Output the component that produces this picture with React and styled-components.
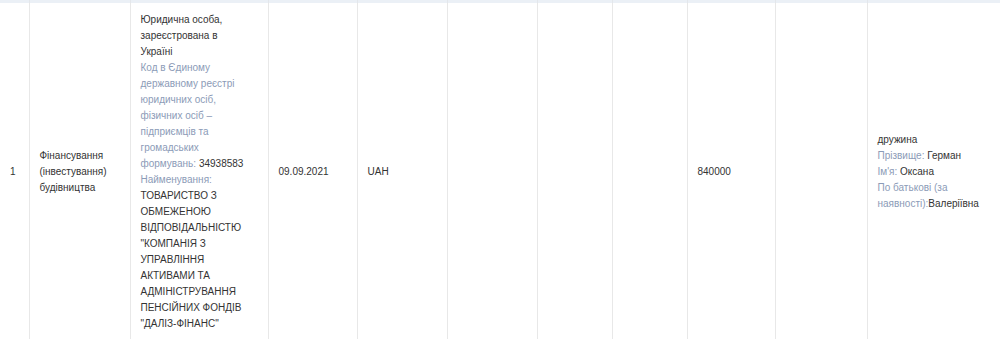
import React from "react";
import styled, { createGlobalStyle } from "styled-components";

const Global = createGlobalStyle`
  html, body { margin: 0; padding: 0; background: #fff; }
  body { font-family: "Liberation Sans", Arial, sans-serif; }
`;

const Table = styled.table`
  width: 1000px;
  border-collapse: collapse;
  table-layout: fixed;
  font-size: 10px;
  line-height: 16px;
  color: #333;
`;

const HeadCell = styled.th`
  height: 3px;
  padding: 0;
  background: #ebf0f6;
  border-right: 1px solid #e4e7eb;
  &:last-child { border-right: none; }
`;

const Cell = styled.td`
  padding: 9px 18px 7px 10px;
  vertical-align: middle;
  text-align: left;
  border-right: 1px solid #e8e8e8;
  word-wrap: break-word;
  &:last-child { border-right: none; }
`;

const Label = styled.span`
  color: #8c9bb7;
`;

const widths = [29, 101, 138, 89, 90, 90, 75, 75, 88, 92, 133];

export default function App() {
  return (
    <>
      <Global />
      <Table>
        <colgroup>
          {widths.map((w, i) => (
            <col key={i} style={{ width: w }} />
          ))}
        </colgroup>
        <thead>
          <tr>
            {widths.map((w, i) => (
              <HeadCell key={i} />
            ))}
          </tr>
        </thead>
        <tbody>
          <tr>
            <Cell>1</Cell>
            <Cell>Фінансування (інвестування) будівництва</Cell>
            <Cell>
              Юридична особа, зареєстрована в Україні
              <br />
              <Label>
                Код в Єдиному державному реєстрі юридичних осіб, фізичних осіб –
                підприємців та громадських формувань:
              </Label>{" "}
              34938583
              <br />
              <Label>Найменування:</Label>
              <br />
              ТОВАРИСТВО З ОБМЕЖЕНОЮ ВІДПОВІДАЛЬНІСТЮ "КОМПАНІЯ З УПРАВЛІННЯ
              АКТИВАМИ ТА АДМІНІСТРУВАННЯ ПЕНСІЙНИХ ФОНДІВ "ДАЛІЗ-ФІНАНС"
            </Cell>
            <Cell>09.09.2021</Cell>
            <Cell>UAH</Cell>
            <Cell />
            <Cell />
            <Cell />
            <Cell>840000</Cell>
            <Cell />
            <Cell>
              дружина
              <br />
              <Label>Прізвище:</Label> Герман
              <br />
              <Label>Ім'я:</Label> Оксана
              <br />
              <Label>По батькові (за наявності):</Label>Валеріївна
            </Cell>
          </tr>
        </tbody>
      </Table>
    </>
  );
}
